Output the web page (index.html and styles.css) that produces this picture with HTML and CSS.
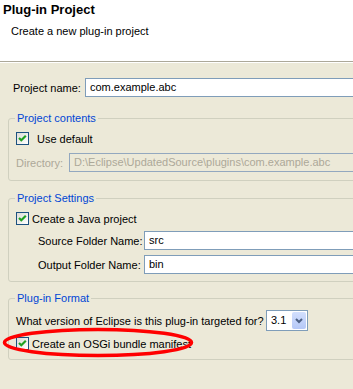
FILE: index.html
```html
<!DOCTYPE html>
<html>
<head>
<title>Plug-in Project</title>
<link rel="stylesheet" href="styles.css">
</head>
<body>
<div class="header">
<div class="title">Plug-in Project</div>
<div class="subtitle">Create a new plug-in project</div>
</div>

<div class="page">
<div class="name-row">
<span class="lbl-name">Project name:</span>
<div class="field">com.example.abc</div>
</div>

<fieldset class="group g-contents">
<legend>Project contents</legend>
<div class="check gap-wide">
<span class="box"><svg width="11" height="11" viewBox="0 0 11 11"><polyline points="2,5 4.3,7.3 8.8,2.8" fill="none" stroke="#21A121" stroke-width="2.2"/></svg></span>
Use default
</div>
<div class="row dir-row">
<span class="lbl-dir">Directory:</span>
<div class="field disabled">D:\Eclipse\UpdatedSource\plugins\com.example.abc</div>
</div>
</fieldset>

<fieldset class="group g-settings">
<legend>Project Settings</legend>
<div class="check">
<span class="box"><svg width="11" height="11" viewBox="0 0 11 11"><polyline points="2,5 4.3,7.3 8.8,2.8" fill="none" stroke="#21A121" stroke-width="2.2"/></svg></span>
Create a Java project
</div>
<div class="row src-row">
<span class="lbl-folder">Source Folder Name:</span>
<div class="field">src</div>
</div>
<div class="row out-row">
<span class="lbl-folder">Output Folder Name:</span>
<div class="field">bin</div>
</div>
</fieldset>

<fieldset class="group g-format">
<legend>Plug-in Format</legend>
<div class="row ver-row">
<span class="lbl-ver">What version of Eclipse is this plug-in targeted for?</span>
<div class="combo">
<span class="val">3.1</span>
<span class="btn"><svg width="14" height="17" viewBox="0 0 14 17"><polyline points="4,7 7,10 10,7" fill="none" stroke="#4D6185" stroke-width="2"/></svg></span>
</div>
</div>
<div class="check osgi-row">
<span class="box"><svg width="11" height="11" viewBox="0 0 11 11"><polyline points="2,5 4.3,7.3 8.8,2.8" fill="none" stroke="#21A121" stroke-width="2.2"/></svg></span>
Create an OSGi bundle manifest
</div>
</fieldset>
</div>

<svg class="mark" width="196" height="34" viewBox="0 0 196 34">
<ellipse cx="97" cy="16.5" rx="93.5" ry="13" fill="none" stroke="#FF0000" stroke-width="3.5"/>
</svg>
</body>
</html>
```

FILE: styles.css
```css
body{
margin:0;
background-color:#ECE9D8;
font-family:"Liberation Sans", Arial, sans-serif;
font-size:11px;
color:#000000;
overflow:hidden;
}

.header{
background-color:#ffffff;
height:61px;
border-bottom:1px solid #ACA899;
box-shadow:0 1px 0 #ffffff;
}

.title{
font-weight:bold;
font-size:13px;
line-height:16px;
padding:2px 0 0 3px;
}

.subtitle{
line-height:13px;
padding:7px 0 0 11px;
}

.page{
width:420px;
}

.name-row{
display:flex;
align-items:center;
margin:16px 0 0 13px;
}

.lbl-name{
width:72px;
}

.field{
flex:1;
height:19px;
box-sizing:border-box;
border:1px solid #7F9DB9;
background-color:#ffffff;
padding-left:4px;
line-height:17px;
white-space:nowrap;
}

.field.disabled{
background-color:#ECE9D8;
border-color:#93A8BF;
color:#ACA899;
}

.group{
margin:14px 0 0 8px;
padding:0 0 8px 7px;
border:1px solid #D0D0BF;
border-radius:3px;
min-width:0;
}

.group legend{
color:#0046D5;
padding:0 2px;
margin-left:-1px;
line-height:14px;
}

.row{
display:flex;
align-items:center;
}

.check{
display:flex;
align-items:center;
gap:3px;
height:13px;
margin-top:7px;
}

.check.gap-wide{
gap:8px;
}

.box{
width:13px;
height:13px;
box-sizing:border-box;
border:1px solid #1C5180;
background:linear-gradient(135deg,#DCDCD7,#ffffff);
}

.box svg{
display:block;
}

.dir-row{
margin-top:8px;
}

.lbl-dir{
width:53px;
color:#ACA899;
}

.g-settings{
margin-top:10px;
padding-bottom:7px;
}

.src-row{
margin-top:6px;
}

.out-row{
margin-top:5px;
}

.lbl-folder{
width:106px;
margin-left:22px;
}

.g-format{
margin-top:9px;
padding-bottom:9px;
}

.ver-row{
margin-top:5px;
}

.lbl-ver{
width:250px;
}

.combo{
display:flex;
width:42px;
height:21px;
box-sizing:border-box;
border:1px solid #7F9DB9;
background-color:#ffffff;
padding:1px;
}

.combo .val{
flex:1;
padding-left:3px;
line-height:17px;
}

.combo .btn{
width:14px;
height:17px;
border-radius:2px;
background:linear-gradient(#D2DFFD,#B5C8F7);
}

.combo .btn svg{
display:block;
}

.osgi-row{
margin-top:6px;
}

.mark{
position:absolute;
left:1px;
top:326px;
}
```
